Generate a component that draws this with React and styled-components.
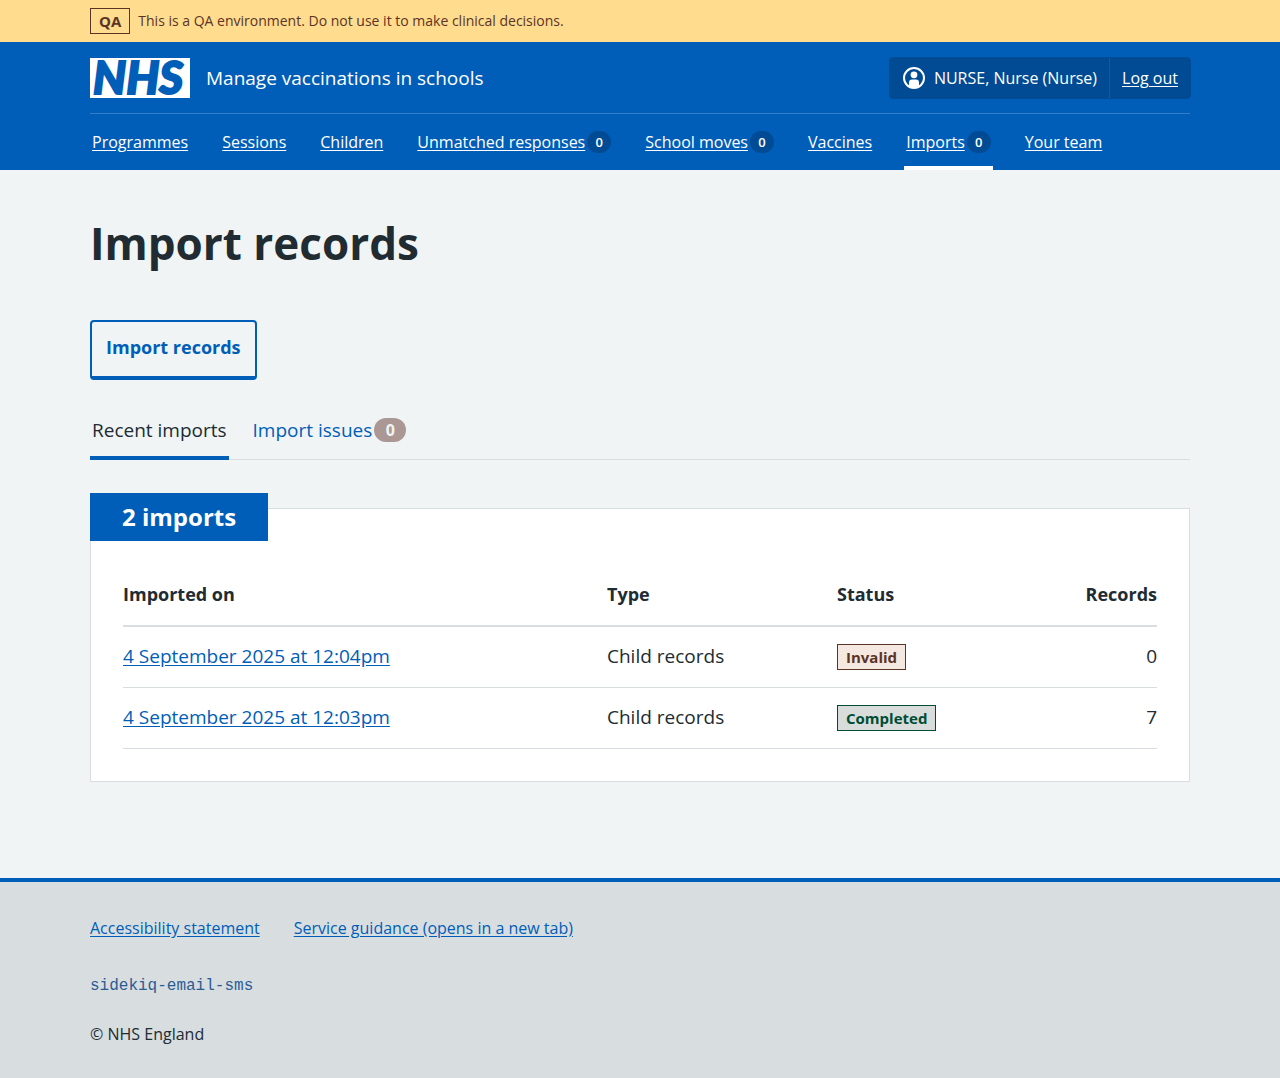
import React from "react";
import styled, { createGlobalStyle } from "styled-components";

const color = {
  blue: "#005eb8",
  darkBlue: "#004b93",
  text: "#212b32",
  page: "#f0f4f5",
  line: "#d8dde0",
  brown: "#5b3427",
};

const GlobalStyle = createGlobalStyle`
  *, *::before, *::after { box-sizing: border-box; }
  body {
    margin: 0;
    background: ${color.line};
    color: ${color.text};
    font-family: "Open Sans", "Noto Sans", Arial, sans-serif;
    font-size: 16px;
    line-height: 24px;
  }
`;

const Container = styled.div`
  max-width: 1164px;
  margin: 0 auto;
  padding: 0 32px;
`;

const Banner = styled.div`
  padding: 8px 0;
  background: #ffdc8e;
  color: ${color.brown};
`;

const BannerRow = styled(Container)`
  display: flex;
  align-items: center;
  gap: 8px;
  font-size: 14px;
  line-height: 26px;
`;

const tones = {
  qa: { bg: "transparent", fg: color.brown },
  invalid: { bg: "#f5e8e0", fg: color.brown },
  completed: { bg: "#d8dddc", fg: "#004c33" },
};

const Tag = styled.strong`
  display: inline-block;
  padding: 0 8px;
  border: 1px solid ${({ $tone }) => tones[$tone].fg};
  background: ${({ $tone }) => tones[$tone].bg};
  color: ${({ $tone }) => tones[$tone].fg};
  font-size: 15px;
  font-weight: 700;
  line-height: 24px;
  vertical-align: top;
`;

const Header = styled.header`
  background: ${color.blue};
  color: #fff;
`;

const HeaderTop = styled.div`
  display: flex;
  align-items: center;
  justify-content: space-between;
  flex-wrap: wrap;
  padding: 16px 0 15px;
  border-bottom: 1px solid #337ec6;
`;

const Service = styled.a`
  display: flex;
  align-items: center;
  gap: 16px;
  color: inherit;
  font-size: 19px;
  text-decoration: none;
`;

const Account = styled.div`
  display: flex;
  gap: 1px;
`;

const AccountItem = styled.div`
  display: flex;
  align-items: center;
  gap: 8px;
  height: 40px;
  padding: 0 12px;
  background: ${color.darkBlue};
  box-shadow: 0 0 0 1px ${color.darkBlue};
  border-radius: ${({ $end }) => ($end ? "0 3px 3px 0" : "3px 0 0 3px")};
  & + & {
    box-shadow: 1px 0 0 ${color.darkBlue}, 0 1px 0 ${color.darkBlue}, 0 -1px 0 ${color.darkBlue}, -1px 0 0 ${color.blue};
  }
`;

const LightLink = styled.a`
  color: #fff;
  text-underline-offset: 2px;
`;

const NavList = styled.ul`
  display: flex;
  flex-wrap: wrap;
  gap: 0 30px;
  margin: 0;
  padding: 0;
  list-style: none;
`;

const NavItem = styled.li`
  display: flex;
  align-items: center;
  gap: 2px;
  height: 56px;
  padding: 4px 2px 0;
  border-bottom: 4px solid ${({ $active }) => ($active ? "#fff" : "transparent")};
`;

const NavCount = styled.span`
  min-width: 24px;
  padding: 0 8px;
  border-radius: 12px;
  background: ${color.darkBlue};
  font-size: 13px;
  font-weight: 600;
  line-height: 22px;
  text-align: center;
`;

const Main = styled.main`
  background: ${color.page};
  padding: 44px 0 96px;
`;

const Title = styled.h1`
  margin: 0 0 48px;
  font-size: 44px;
  font-weight: 700;
  line-height: 58px;
`;

const ImportButton = styled.button`
  display: block;
  height: 60px;
  padding: 0 14px 4px;
  border: 2px solid ${color.blue};
  border-bottom-width: 4px;
  border-radius: 4px;
  background: transparent;
  color: ${color.blue};
  font: inherit;
  font-size: 18px;
  font-weight: 700;
  cursor: pointer;
`;

const Tabs = styled.nav`
  display: flex;
  gap: 22px;
  margin: 20px 0 33px;
  box-shadow: inset 0 -1px 0 ${color.line};
`;

const Tab = styled.a`
  display: flex;
  align-items: center;
  gap: 2px;
  height: 60px;
  padding: 4px 2px 0;
  border-bottom: 4px solid ${({ $active }) => ($active ? color.blue : "transparent")};
  color: ${({ $active }) => ($active ? color.text : color.blue)};
  font-size: 19px;
  text-decoration: none;
`;

const TabCount = styled.span`
  min-width: 32px;
  border-radius: 12px;
  background: #ab9894;
  color: #f0f4f5;
  font-size: 16px;
  font-weight: 700;
  line-height: 24px;
  text-align: center;
`;

const Card = styled.section`
  display: flow-root;
  margin-top: 48px;
  padding: 0 32px 32px;
  border: 1px solid ${color.line};
  background: #fff;
`;

const CardTitle = styled.h2`
  width: fit-content;
  margin: -16px 0 24px -33px;
  padding: 0 32px;
  background: ${color.blue};
  color: #fff;
  font-size: 24px;
  font-weight: 700;
  line-height: 48px;
`;

const Table = styled.table`
  width: 100%;
  table-layout: fixed;
  border-collapse: separate;
  border-spacing: 0;
  font-size: 19px;
  line-height: 28px;
`;

const Th = styled.th`
  width: ${({ $width }) => $width || "auto"};
  padding: 15px 0 17px;
  border-bottom: 2px solid ${color.line};
  font-size: 18px;
  font-weight: 700;
  text-align: ${({ $numeric }) => ($numeric ? "right" : "left")};
`;

const Td = styled.td`
  padding: 15px 0 17px;
  border-bottom: 1px solid ${color.line};
  text-align: ${({ $numeric }) => ($numeric ? "right" : "left")};
  ${Tag} { margin-top: 2px; }
`;

const TextLink = styled.a`
  color: ${color.blue};
  text-underline-offset: 2px;
`;

const Footer = styled.footer`
  padding: 34px 0 32px;
  border-top: 4px solid ${color.blue};
  background: ${color.line};
`;

const FooterLinks = styled.div`
  display: flex;
  flex-wrap: wrap;
  gap: 0 34px;
`;

const Release = styled.p`
  margin: 34px 0 24px;
  color: #2b5c94;
  font-family: "Liberation Mono", monospace;
`;

const Copyright = styled.p`
  margin: 0;
`;

const LogoMark = styled.svg`
  display: block;
  overflow: visible;
`;

const Logo = () => (
  <LogoMark width="100" height="40" viewBox="0 0 100 40" role="img" aria-label="NHS">
    <rect width="100" height="40" fill="#fff" />
    <text
      x="3"
      y="36"
      fill={color.blue}
      stroke={color.blue}
      strokeWidth="2"
      fontFamily="Lato, sans-serif"
      fontSize="46"
      fontWeight="900"
      fontStyle="italic"
    >
      NHS
    </text>
  </LogoMark>
);

const UserIcon = () => (
  <svg width="24" height="24" viewBox="0 0 24 24" aria-hidden="true">
    <circle cx="12" cy="12" r="10" fill="none" stroke="#fff" strokeWidth="2" />
    <circle cx="12" cy="8.800" r="3.400" fill="#fff" />
    <path d="M7 20v-3.500a3 3 0 0 1 3-3h4a3 3 0 0 1 3 3V20a9.500 9.500 0 0 1-10 0z" fill="#fff" />
  </svg>
);

const navigation = [
  { label: "Programmes" },
  { label: "Sessions" },
  { label: "Children" },
  { label: "Unmatched responses", count: 0 },
  { label: "School moves", count: 0 },
  { label: "Vaccines" },
  { label: "Imports", count: 0, active: true },
  { label: "Your team" },
];

const imports = [
  { date: "4 September 2025 at 12:04pm", type: "Child records", status: "Invalid", tone: "invalid", records: 0 },
  { date: "4 September 2025 at 12:03pm", type: "Child records", status: "Completed", tone: "completed", records: 7 },
];

export default function App() {
  return (
    <>
      <GlobalStyle />
      <Banner>
        <BannerRow>
          <Tag $tone="qa">QA</Tag>
          <span>This is a QA environment. Do not use it to make clinical decisions.</span>
        </BannerRow>
      </Banner>
      <Header>
        <Container>
          <HeaderTop>
            <Service href="#">
              <Logo />
              <span>Manage vaccinations in schools</span>
            </Service>
            <Account>
              <AccountItem>
                <UserIcon />
                <span>NURSE, Nurse (Nurse)</span>
              </AccountItem>
              <AccountItem $end>
                <LightLink href="#">Log out</LightLink>
              </AccountItem>
            </Account>
          </HeaderTop>
          <nav aria-label="Menu">
            <NavList>
              {navigation.map(({ label, count, active }) => (
                <NavItem key={label} $active={active}>
                  <LightLink href="#" aria-current={active ? "page" : undefined}>{label}</LightLink>
                  {count !== undefined && <NavCount>{count}</NavCount>}
                </NavItem>
              ))}
            </NavList>
          </nav>
        </Container>
      </Header>
      <Main>
        <Container>
          <Title>Import records</Title>
          <ImportButton type="button">Import records</ImportButton>
          <Tabs aria-label="Imports">
            <Tab href="#" $active aria-current="page">Recent imports</Tab>
            <Tab href="#">
              Import issues
              <TabCount>0</TabCount>
            </Tab>
          </Tabs>
          <Card>
            <CardTitle>2 imports</CardTitle>
            <Table>
              <thead>
                <tr>
                  <Th scope="col">Imported on</Th>
                  <Th scope="col" $width="230px">Type</Th>
                  <Th scope="col" $width="200px">Status</Th>
                  <Th scope="col" $width="120px" $numeric>Records</Th>
                </tr>
              </thead>
              <tbody>
                {imports.map((row) => (
                  <tr key={row.date}>
                    <Td><TextLink href="#">{row.date}</TextLink></Td>
                    <Td>{row.type}</Td>
                    <Td><Tag $tone={row.tone}>{row.status}</Tag></Td>
                    <Td $numeric>{row.records}</Td>
                  </tr>
                ))}
              </tbody>
            </Table>
          </Card>
        </Container>
      </Main>
      <Footer>
        <Container>
          <FooterLinks>
            <TextLink href="#">Accessibility statement</TextLink>
            <TextLink href="#">Service guidance (opens in a new tab)</TextLink>
          </FooterLinks>
          <Release>sidekiq-email-sms</Release>
          <Copyright>© NHS England</Copyright>
        </Container>
      </Footer>
    </>
  );
}
